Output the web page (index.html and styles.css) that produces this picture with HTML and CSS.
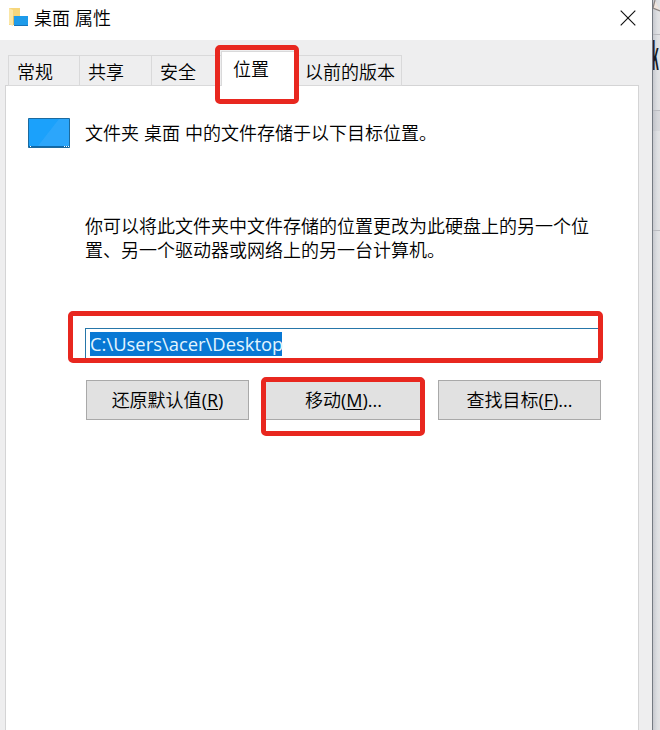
FILE: index.html
```html
<!DOCTYPE html>
<html lang="zh-CN">
<head>
<meta charset="utf-8">
<title>桌面 属性</title>
<link rel="stylesheet" href="styles.css">
</head>
<body>
<div class="screen">
  <main class="dialog">
    <header class="titlebar">
      <svg class="folder" width="21" height="20" viewBox="0 0 21 20">
        <path d="M1 0h11v17H1z" fill="#f6d67c"/>
        <path d="M1 0l4 2v16l-4-2z" fill="#fae6a6"/>
        <path d="M5 8h2v9H5z" fill="#dfbd67"/>
        <path d="M6 8h14v10H6z" fill="#1e9bea"/>
        <path d="M6 17h14v1H6z" fill="#1673bb"/>
      </svg>
      <h1 class="title">桌面 属性</h1>
      <svg class="close" width="16" height="16" viewBox="0 0 16 16"><path d="M.7.7l14.6 14.6M15.3.7L.7 15.3" stroke="#111" stroke-width="1.15" fill="none"/></svg>
    </header>
    <nav class="tabs">
      <div class="tab first">常规</div>
      <div class="tab">共享</div>
      <div class="tab">安全</div>
      <div class="tab active">位置<span class="mark mark-tab"></span></div>
      <div class="tab last">以前的版本</div>
    </nav>
    <section class="page">
      <div class="intro">
        <svg width="42" height="30" viewBox="0 0 42 30">
          <path d="M.5.5h41v29H.5z" fill="#1ba1fb" stroke="#1c6a9e"/>
          <path d="M10 28L31 1h10v27z" fill="#38aafc" opacity=".6"/>
          <path d="M1 28h40v1H1z" fill="#0e68a9"/>
          <path d="M2 28.5h1M36 28.5h1M38 28.5h1M40 28.5h1" stroke="#fff"/>
        </svg>
        <span>文件夹 桌面 中的文件存储于以下目标位置。</span>
      </div>
      <p class="note">你可以将此文件夹中文件存储的位置更改为此硬盘上的另一个位<br>置、另一个驱动器或网络上的另一台计算机。</p>
      <div class="field"><span class="selected">C:\Users\acer\Desktop</span><span class="mark mark-field"></span></div>
      <div class="buttons">
        <div class="button">还原默认值<span class="key">(<u>R</u>)</span></div>
        <div class="button">移动<span class="key">(<u>M</u>)...</span><span class="mark mark-button"></span></div>
        <div class="button">查找目标<span class="key">(<u>F</u>)...</span></div>
      </div>
    </section>
  </main>
  <aside class="behind">
    <div class="strip strip-top"><svg width="7" height="13" viewBox="0 0 7 13"><path d="M2 0L0 8l7 3" fill="#eee4dd" stroke="#8b8583" stroke-width="1.2"/></svg></div>
    <div class="strip strip-text"><span>k</span></div>
    <div class="strip strip-band"></div>
    <div class="strip strip-mid"></div>
    <div class="strip strip-rest"></div>
  </aside>
</div>
</body>
</html>
```

FILE: styles.css
```css
* { box-sizing: border-box; }
body {
  margin: 0;
  color: #000;
  font: 18px/24px "Noto Sans CJK SC", sans-serif;
  font-weight: 350;
  word-spacing: 1px;
}
.screen { display: flex; width: 660px; height: 730px; overflow: hidden; }
.dialog { width: 653px; background: #eeeeef; border-right: 1px solid #747a82; }
.titlebar { display: flex; align-items: center; height: 40px; padding: 0 16px 5px 8px; background: #fff; }
.title { margin: -1px auto 0 5px; font-size: 18px; font-weight: 350; line-height: 24px; }
.close { flex: none; }
.folder { flex: none; }
.tabs { display: flex; align-items: flex-end; height: 46px; padding-left: 8px; }
.tab {
  position: relative;
  width: 72px;
  height: 31px;
  padding: 3px 0 0 8px;
  border: solid #d9d9da;
  border-width: 1px 0 1px 1px;
  white-space: nowrap;
}
.tab.first { width: 71px; }
.tab:nth-child(3) { width: 70px; }
.tab.active { z-index: 1; width: 75px; height: 35px; padding: 4px 0 0 11px; background: #fff; border-bottom: 0; }
.tab.last { width: 106px; border-right-width: 1px; }
.page { width: 634px; height: 645px; margin: -1px 0 0 5px; padding: 31px 36px 0 22px; background: #fff; border: 1px solid #d4d4d5; border-bottom: 0; }
.intro { display: flex; align-items: center; gap: 15px; height: 32px; white-space: nowrap; }
.intro span { margin-top: -2px; }
.note { margin: 64px 0 0 57px; white-space: nowrap; }
.field {
  position: relative;
  width: 516px;
  height: 35px;
  margin: 67px 0 0 57px;
  padding-top: 3px;
  padding-left: 4px;
  border: 1px solid #2676a9;
}
.selected { display: block; width: 192px; height: 24px; background: #0878d4; color: #e2f5ff; font: 18.4px/24px "Open Sans", "Noto Sans", sans-serif; white-space: nowrap; }
.buttons { display: grid; grid-template-columns: repeat(3, 163px); gap: 13px; margin: 17px 0 0 58px; }
.button { position: relative; height: 40px; border: 1px solid #a9a9a9; background: #e1e1e1; line-height: 37px; text-align: center; white-space: nowrap; }
.key { font-family: "Open Sans", "Noto Sans", sans-serif; font-weight: 400; }
.button u { text-decoration-thickness: 1px; text-underline-offset: 2px; }
.mark { position: absolute; border: 5px solid #e8271f; border-radius: 5px; }
.mark-tab { top: -7px; left: -7px; width: 84px; height: 59px; }
.mark-field { top: -18px; left: -18px; width: 535px; height: 52px; }
.mark-button { top: -4px; left: -2px; width: 164px; height: 59px; }
.behind { width: 7px; overflow: hidden; background: linear-gradient(90deg, #c7c9cf, #dddfe2 60%, #e3e3e5); }
.strip { border-bottom: 1px solid #babbc0; }
.strip-top { height: 35px; }
.strip-top svg { display: block; }
.strip-text { height: 76px; }
.strip-text span { display: block; width: 21px; margin-left: -1px; font: bold 40px/43px "Liberation Sans", sans-serif; color: #161820; transform: scaleX(.3); transform-origin: left; }
.strip-band { height: 20px; background: rgba(150, 150, 155, .12); border: 0; }
.strip-mid { height: 100px; }
.strip-rest { height: 499px; border: 0; }
```
